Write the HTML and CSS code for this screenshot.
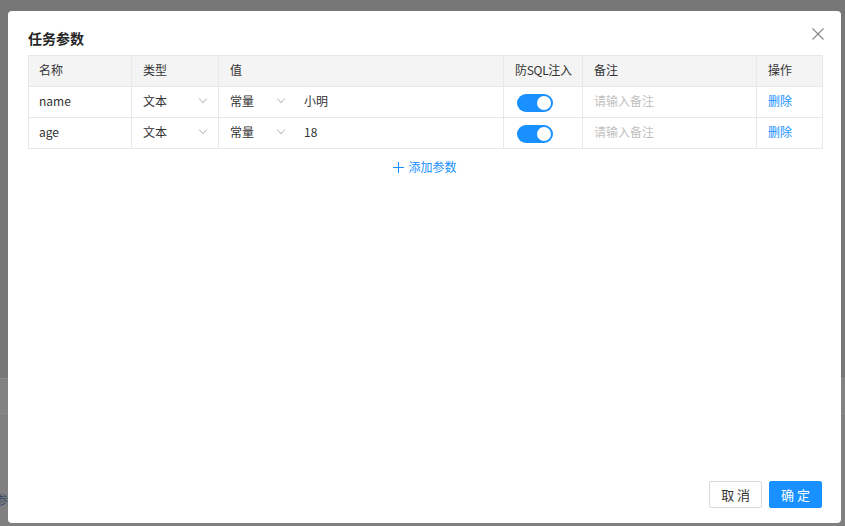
FILE: index.html
```html
<!DOCTYPE html>
<html lang="zh-CN">
<head>
    <meta charset="UTF-8">
    <meta name="viewport" content="width=device-width, initial-scale=1.0">
    <title>任务参数</title>
    <link rel="stylesheet" href="styles.css">
</head>
<body>

<div class="page">
    <div class="page-top"></div>
    <div class="page-row"></div>
    <div class="page-row page-row-text"><span>参数</span></div>
</div>

<div class="modal">
    <h3 class="modal-title">任务参数</h3>
    <button class="modal-close" type="button">
        <svg width="12" height="12" viewBox="0 0 12 12"><path d="M0.5 0.5L11.5 11.5M11.5 0.5L0.5 11.5" stroke="#8c8c8c" stroke-width="1.2" fill="none"/></svg>
    </button>

    <table class="param-table">
        <colgroup>
            <col style="width:103px">
            <col style="width:87px">
            <col style="width:285px">
            <col style="width:79px">
            <col style="width:174px">
            <col style="width:66px">
        </colgroup>
        <thead>
            <tr>
                <th>名称</th>
                <th>类型</th>
                <th>值</th>
                <th class="th-sql">防SQL注入</th>
                <th>备注</th>
                <th>操作</th>
            </tr>
        </thead>
        <tbody>
            <tr>
                <td>name</td>
                <td><div class="select"><span>文本</span><i class="arrow"></i></div></td>
                <td>
                    <div class="value-cell">
                        <div class="select select-kind"><span>常量</span><i class="arrow"></i></div>
                        <span class="value-text">小明</span>
                    </div>
                </td>
                <td class="switch-cell"><span class="switch"><span class="knob"></span></span></td>
                <td class="placeholder">请输入备注</td>
                <td><a class="link" href="#">删除</a></td>
            </tr>
            <tr>
                <td>age</td>
                <td><div class="select"><span>文本</span><i class="arrow"></i></div></td>
                <td>
                    <div class="value-cell">
                        <div class="select select-kind"><span>常量</span><i class="arrow"></i></div>
                        <span class="value-text">18</span>
                    </div>
                </td>
                <td class="switch-cell"><span class="switch"><span class="knob"></span></span></td>
                <td class="placeholder">请输入备注</td>
                <td><a class="link" href="#">删除</a></td>
            </tr>
        </tbody>
    </table>

    <div class="add-row">
        <a class="add-link" href="#">
            <svg width="11" height="11" viewBox="0 0 11 11"><path d="M5.5 0V11M0 5.5H11" stroke="#1890ff" stroke-width="1.1" fill="none"/></svg>
            添加参数
        </a>
    </div>

    <div class="modal-footer">
        <button class="btn" type="button">取 消</button>
        <button class="btn btn-primary" type="button">确 定</button>
    </div>
</div>

</body>
</html>
```

FILE: styles.css
```css
body {
    margin: 0;
    font-family: "Noto Sans CJK SC", "Noto Sans", sans-serif;
    background-color: #808080;
    width: 845px;
    height: 526px;
    overflow: hidden;
}
.page-top {
    height: 378px;
    background-color: #777777;
}
.page-row {
    height: 34px;
    border-top: 1px solid #8a8a8a;
    background-color: #828282;
}
.page-row-text {
    position: relative;
    background-color: #808080;
}
.page-row-text span {
    position: absolute;
    left: -4px;
    top: 77px;
    font-size: 12px;
    color: #3a4a66;
}
.modal {
    position: absolute;
    left: 8px;
    top: 11px;
    width: 833px;
    height: 512px;
    box-sizing: border-box;
    padding: 17px 19px 15px 20px;
    background-color: white;
    border-radius: 4px;
    display: flex;
    flex-direction: column;
}
.modal-title {
    margin: 0 0 7px;
    font-size: 14px;
    line-height: 20px;
    font-weight: bold;
    color: #262626;
}
.modal-close {
    position: absolute;
    top: 17px;
    right: 17px;
    padding: 0;
    border: none;
    background: none;
    width: 12px;
    height: 12px;
    display: flex;
}
.param-table {
    width: 794px;
    border-collapse: collapse;
    table-layout: fixed;
    font-size: 12px;
    line-height: 16px;
    color: #333;
}
.param-table th,
.param-table td {
    height: 31px;
    padding: 0 10px 2px 11px;
    border: 1px solid #e8e8e8;
    text-align: left;
    box-sizing: border-box;
    white-space: nowrap;
}
.param-table th {
    background-color: #f4f4f4;
    font-weight: normal;
    color: #333;
}
.param-table .th-sql {
    padding-right: 0;
    letter-spacing: -0.3px;
}
.param-table td:first-child,
.param-table th:first-child {
    padding-left: 10px;
}
.select {
    display: flex;
    align-items: center;
    justify-content: space-between;
    padding-right: 2px;
}
.select-kind {
    width: 54px;
    flex: none;
}
.arrow {
    width: 5px;
    height: 5px;
    border-right: 1px solid #c4c4c4;
    border-bottom: 1px solid #c4c4c4;
    transform: rotate(45deg);
    margin-top: -4px;
}
.value-cell {
    display: flex;
    align-items: center;
}
.value-text {
    margin-left: 18px;
}
.param-table .switch-cell {
    padding: 1px 0 0 13px;
}
.switch {
    display: flex;
    align-items: center;
    justify-content: flex-end;
    width: 36px;
    height: 18px;
    box-sizing: border-box;
    padding: 2px;
    border-radius: 9px;
    background-color: #1890ff;
}
.knob {
    width: 14px;
    height: 14px;
    border-radius: 50%;
    background-color: white;
}
.placeholder {
    color: #bfbfbf;
}
.link {
    color: #1890ff;
    text-decoration: none;
}
.add-row {
    display: flex;
    justify-content: center;
    margin-top: 9px;
}
.add-link {
    display: flex;
    align-items: center;
    gap: 4px;
    font-size: 12px;
    line-height: 18px;
    color: #1890ff;
    text-decoration: none;
}
.modal-footer {
    margin-top: auto;
    display: flex;
    justify-content: flex-end;
    gap: 7px;
}
.btn {
    height: 27px;
    padding: 0 11px;
    font-family: inherit;
    font-size: 13px;
    color: #333;
    background-color: white;
    border: 1px solid #d9d9d9;
    border-radius: 2px;
    cursor: pointer;
}
.btn-primary {
    color: white;
    background-color: #1890ff;
    border-color: #1890ff;
}
```
